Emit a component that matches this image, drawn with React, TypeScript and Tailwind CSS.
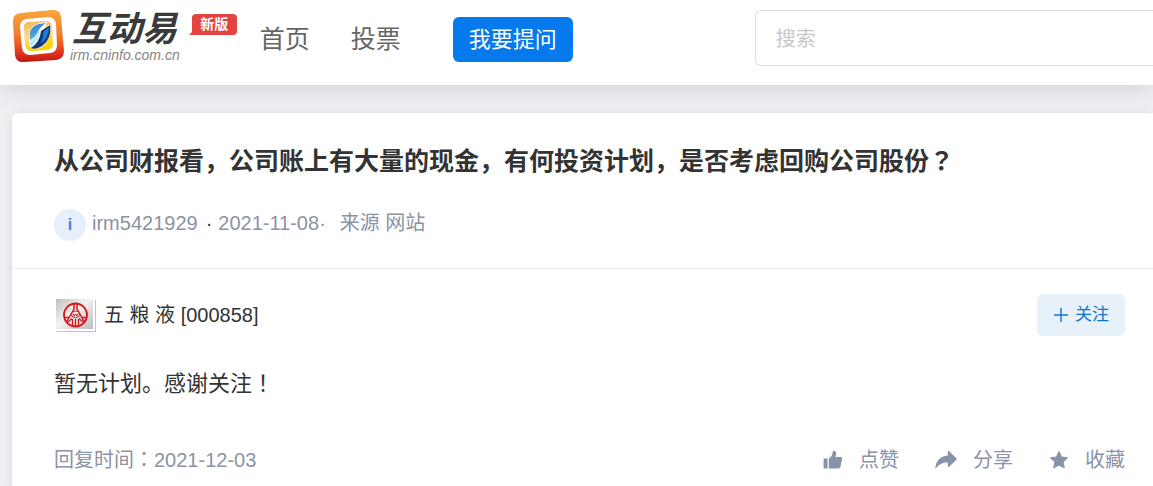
import { FormEvent, ReactNode, useState } from "react"

interface NavLink {
  label: string
  href: string
}

const navLinks: NavLink[] = [
  { label: "首页", href: "#home" },
  { label: "投票", href: "#vote" },
]

function LogoMark() {
  return (
    <svg className="w-[54px] h-[54px]" viewBox="0 0 54 54" aria-hidden="true">
      <defs>
        <linearGradient id="frame" x1="0" y1="0" x2="0" y2="1">
          <stop offset="0" stopColor="#f9a63e" />
          <stop offset="0.5" stopColor="#f17a2c" />
          <stop offset="0.8" stopColor="#e23a1f" />
          <stop offset="1" stopColor="#c01512" />
        </linearGradient>
        <linearGradient id="tile" x1="0" y1="0" x2="0.2" y2="1">
          <stop offset="0" stopColor="#f6b25a" />
          <stop offset="0.5" stopColor="#fbd98a" />
          <stop offset="1" stopColor="#fbd400" />
        </linearGradient>
        <linearGradient id="leaf" x1="0" y1="0" x2="0.6" y2="1">
          <stop offset="0" stopColor="#1b6fc0" />
          <stop offset="1" stopColor="#6cc8ee" />
        </linearGradient>
      </defs>
      <path d="M9 4 L40 1 Q48 0 49 8 L52 42 Q52 50 44 51 L12 53 Q4 54 3 46 L1 13 Q0 5 9 4Z" fill="url(#frame)" />
      <path d="M14 10 L36 8 Q43 8 44 15 L45 36 Q45 43 38 44 L18 46 Q11 46 10 39 L8 18 Q8 11 14 10Z" fill="#fff" />
      <path d="M16 13 L34 12 Q40 12 40 18 L41 34 Q41 40 35 41 L20 42 Q14 42 13 36 L12 19 Q11 14 16 13Z" fill="url(#tile)" />
      <path d="M17 32 Q16 19 25 15 Q29 13 35 13 L33 19 L38 15 Q40 30 30 38 Q24 41 18 38Z" fill="#fff" />
      <path d="M18 31 Q16 18 27 15 L34 14 Q28 18 26 23 Q23 29 18 31Z" fill="url(#leaf)" />
      <path d="M17 33 Q25 29 28 20 Q28 30 19 38Z" fill="#bfe6f6" />
      <path d="M29 22 L38 16 Q40 30 30 37 Q24 41 19 39 Q28 33 29 22Z" fill="#14387e" />
      <path d="M31 23 L37 18 Q37 29 28 35 Q32 29 31 23Z" fill="#1680cf" />
    </svg>
  )
}

function CompanyLogo() {
  return (
    <svg className="w-[42px] h-[34px] shrink-0" viewBox="0 0 42 34" aria-hidden="true">
      <defs>
        <linearGradient id="plate" x1="0" y1="0" x2="1" y2="1">
          <stop offset="0" stopColor="#bdbdbd" />
          <stop offset="0.45" stopColor="#f2f2f2" />
          <stop offset="1" stopColor="#bdbdbd" />
        </linearGradient>
      </defs>
      <rect x="2" y="2" width="40" height="32" fill="#c4c4c4" />
      <rect x="0" y="0" width="41" height="33" fill="#fff" />
      <rect x="2" y="1" width="37" height="30" fill="url(#plate)" />
      <g fill="none" stroke="#d9141c" strokeWidth="1.8">
        <circle cx="21.5" cy="17" r="11.5" />
        <path d="M20 6 V11 L12.5 24 M23 6 V11 L30.5 24" strokeWidth="1.5" />
        <path d="M10.5 19.5 H15 M28 19.5 H32.5 M14 24 L18 20.5 M29 24 L25 20.5" strokeWidth="1.3" />
        <path d="M17.5 15 Q21.5 11 25.5 15 L25 18.5 Q21.5 21 18 18.5Z" fill="#f6e4e4" strokeWidth="1" />
        <path d="M19 15.5 L20.3 18 L21.5 16 L22.7 18 L24 15.5" strokeWidth="1" />
        <path d="M18.5 21 V27.5 M21.5 21 V28 M24.5 21 V27.5" strokeWidth="1.3" />
      </g>
    </svg>
  )
}

function LikeIcon() {
  return (
    <svg className="w-5 h-5" viewBox="0 0 20 20" fill="currentColor" aria-hidden="true">
      <path d="M1.2 8.6h3.3v10H1.2a.6.6 0 0 1-.6-.6V9.2a.6.6 0 0 1 .6-.6z" />
      <path d="M5.8 8.4C8.6 6.8 9.6 4.6 9.8 1.6c.1-.8.8-1 1.5-.8 1.8.5 2.3 2.2 1.6 4.4l-.5 1.9h5c1.2 0 2 .9 1.7 2.1l-1.7 7.6c-.3 1.2-1 1.8-2.2 1.8H5.8z" />
    </svg>
  )
}

function ShareIcon() {
  return (
    <svg className="w-[22px] h-5" viewBox="0 0 22 20" fill="currentColor" aria-hidden="true">
      <path d="M12.8 1.9c0-.8.8-1.1 1.4-.6l7.2 6.9c.5.5.5 1.1 0 1.6l-7.2 6.9c-.6.5-1.4.2-1.4-.6v-3.7C7.6 12.3 4.2 14.1.8 18.3c-.3.3-.6.1-.5-.3C1.3 10.9 5.2 6.3 12.8 5.6z" />
    </svg>
  )
}

function StarIcon() {
  return (
    <svg className="w-5 h-5" viewBox="0 0 20 20" fill="currentColor" stroke="currentColor" strokeLinejoin="round" aria-hidden="true">
      <path d="M10 1.5l2.6 5.5 6 .8-4.4 4.2 1.1 6L10 15.1 4.7 18l1.1-6L1.4 7.8l6-.8z" />
    </svg>
  )
}

// full-width marks that sit in the middle of their cell
function Mark({ children }: { children: string }) {
  return <span className="font-['Noto_Sans_CJK_TC',sans-serif] leading-none" lang="zh-TW">{children}</span>
}

function Header() {
  const handleSearch = (e: FormEvent): void => {
    e.preventDefault()
  }

  return (
    <header className="relative z-10 flex h-[85px] bg-white pl-3 shadow-[0_2px_24px_rgba(0,0,0,0.14)]">
      {/* Logo */}
      <a href="#home" className="flex items-start pt-[9px]">
        <LogoMark />
        <span className="ml-1 flex flex-col italic">
          <span className="pl-[2px] text-[35px] leading-10 font-bold text-[#3a3a3a]">互动易</span>
          <span className="text-sm leading-3 text-[#858585]">irm.cninfo.com.cn</span>
        </span>
      </a>
      <span className="relative mt-[14px] ml-3 h-[21px] w-[45px] rounded-sm bg-[#e2453f] text-center text-sm leading-5 font-bold text-white">
        新版
        <svg className="absolute bottom-0 -left-1 h-2 w-2" viewBox="0 0 8 8" aria-hidden="true">
          <path d="M4 0 V5 L1 8 H8 V0Z" fill="#e2453f" />
        </svg>
      </span>

      <nav className="ml-[23px] flex items-start gap-[41px] pt-[21px] text-[25px] leading-9 text-[#666]">
        {navLinks.map((link: NavLink) => (
          <a key={link.href} href={link.href} className="hover:text-[#0679ec]">
            {link.label}
          </a>
        ))}
      </nav>

      <button className="mt-[17px] ml-[52px] h-[45px] w-[120px] shrink-0 rounded-md bg-[#0679ec] text-[22px] text-white">
        我要提问
      </button>

      <form onSubmit={handleSearch} className="ml-[182px] min-w-0 flex-1 pt-[10px]">
        <input
          type="search"
          aria-label="搜索"
          placeholder="搜索"
          className="h-14 w-full rounded-l-md border border-r-0 border-[#dcdee2] px-5 pt-[2px] text-xl text-[#333] outline-none placeholder:text-[#c8c8c8]"
        />
      </form>
    </header>
  )
}

function Action({ icon, label }: { icon: ReactNode; label: string }) {
  return (
    <button className="flex items-center gap-4">
      {icon}
      <span className="text-xl">{label}</span>
    </button>
  )
}

export default function App() {
  const [followed, setFollowed] = useState<boolean>(false)

  return (
    <div className="flex min-h-screen flex-col bg-[#eff0f3] font-['Liberation_Sans','Noto_Sans_CJK_SC',sans-serif]">
      <Header />

      <main className="mt-7 ml-3 flex-1 rounded-tl-md bg-white shadow-[0_2px_12px_rgba(0,0,0,0.1)]">
        {/* Question */}
        <section className="h-[156px] border-b border-[#eceef2] pt-7 pl-[42px]">
          <h1 className="text-[25px] leading-10 font-bold text-[#333]">
            从公司财报看，公司账上有大量的现金，有何投资计划，是否考虑回购公司股份<Mark>？</Mark>
          </h1>
          <div className="mt-7 flex items-center text-xl leading-8 text-[#8c93a3]">
            <span className="mr-[6px] h-8 w-8 rounded-full bg-[#e6effc] text-center text-base leading-8 font-bold text-[#4b79dd]">i</span>
            <a href="#user" className="-mt-1">irm5421929</a>
            <span className="-mt-1 ml-2 text-[#333]">·</span>
            <time className="-mt-1 ml-[6px]">2021-11-08</time>
            <span className="-mt-1">·</span>
            <span className="-mt-1 ml-[14px]">来源 网站</span>
          </div>
        </section>

        {/* Answer */}
        <section className="pt-[25px] pr-7 pb-2 pl-[42px]">
          <div className="flex items-center justify-between">
            <a href="#company" className="flex items-center gap-2 text-xl text-[#333]">
              <CompanyLogo />
              五 粮 液 [000858]
            </a>
            <button
              onClick={() => setFollowed(!followed)}
              aria-pressed={followed}
              className="flex h-[42px] w-[88px] items-center justify-center gap-[6px] rounded-md bg-[#e7f1fa] text-[17px] text-[#0f75cb]"
            >
              <svg className="h-4 w-4" viewBox="0 0 16 16" fill="none" stroke="currentColor" strokeWidth="1.4" aria-hidden="true">
                <path d="M8 1v14M1 8h14" />
              </svg>
              关注
            </button>
          </div>
          <p className="mt-8 text-[22px] leading-8 text-[#333]">
            暂无计划。感谢关注<Mark>！</Mark>
          </p>
          <div className="mt-[46px] flex items-center justify-between text-[#8893aa]">
            <span className="text-xl text-[#8c93a3]">
              回复时间<Mark>：</Mark>2021-12-03
            </span>
            <div className="flex gap-9">
              <Action icon={<LikeIcon />} label="点赞" />
              <Action icon={<ShareIcon />} label="分享" />
              <Action icon={<StarIcon />} label="收藏" />
            </div>
          </div>
        </section>
      </main>
    </div>
  )
}
